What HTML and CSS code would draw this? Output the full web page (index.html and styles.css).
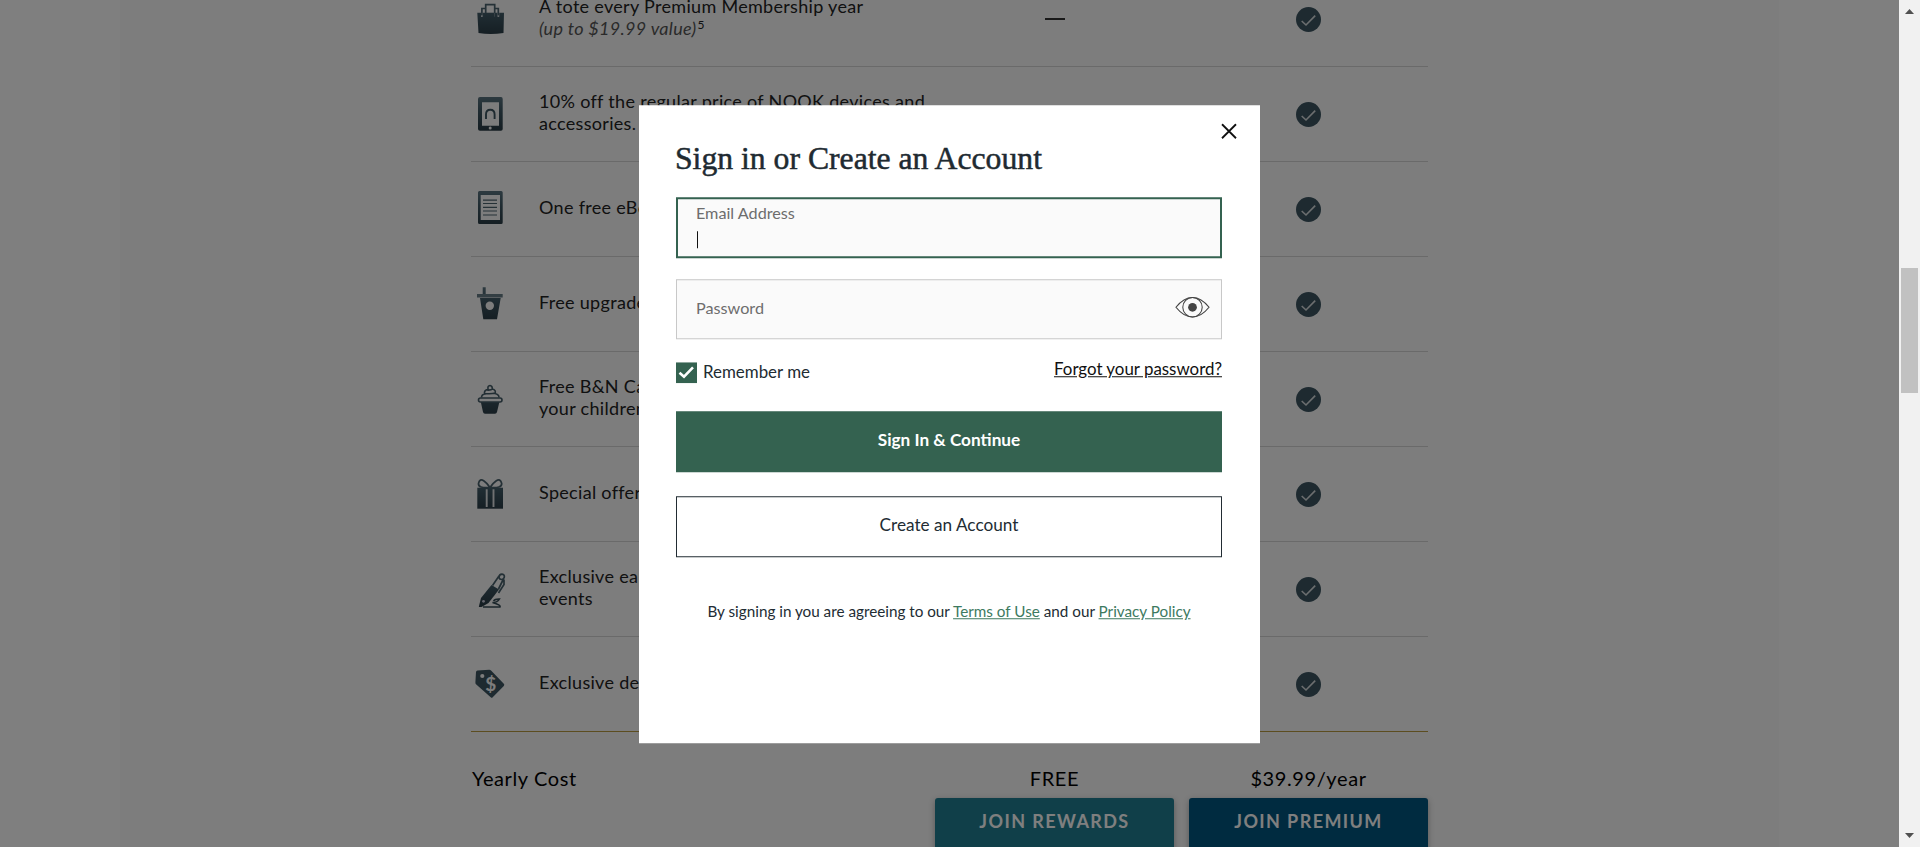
FILE: index.html
```html
<!DOCTYPE html>
<html lang="en">
<head>
<meta charset="utf-8">
<title>Sign in or Create an Account</title>
<link rel="stylesheet" href="styles.css">
</head>
<body>
<svg class="defs" width="0" height="0">
  <defs>
    <linearGradient id="ink" gradientUnits="userSpaceOnUse" x1="0" y1="4" x2="0" y2="36">
      <stop offset="0" stop-color="#58727e"/><stop offset=".4" stop-color="#3e5763"/><stop offset="1" stop-color="#2a3c46"/>
    </linearGradient>
    <symbol id="check" viewBox="0 0 25 25">
      <circle cx="12.5" cy="12.5" r="12.5" fill="#3c5561"/>
      <path d="M5.700 14l4.300 4 9.200-9.400" fill="none" stroke="#d8dcde" stroke-width="1.600"/>
    </symbol>
  </defs>
</svg>
<div class="window">
  <div class="viewport">
    <main class="page">
      <div class="benefits">
        <div class="row">
          <svg class="icon" viewBox="0 0 40 40"><path d="M6.300 13.700H10v4h1.700v-4h3.300v4h8.500v-4h3v4h1.700v-4H33L32.500 34q-13 2-25 0z" fill="url(#ink)"/><path d="M15 13.700h8.500v5H15z" fill="url(#ink)"/><path d="M10.900 16.500V9.500h3.800M23.700 9.500h3.600v7M14.700 14V5.700h9V14" fill="none" stroke="#4a626e" stroke-width="1.700"/></svg>
          <p class="label">A tote every Premium Membership year<br><em>(up to $19.99 value)</em><sup>5</sup></p>
          <span class="dash"></span>
          <svg class="tick"><use href="#check"/></svg>
        </div>
        <div class="row">
          <svg class="icon" viewBox="0 0 40 40"><path fill-rule="evenodd" d="M9 3h21q1.700 0 1.700 2v30q0 1.700-1.700 1.700H9Q7 36.700 7 35V5q0-2 2-2zM11 8.300v23.400h17V8.300z" fill="url(#ink)"/><path d="M15 25v-4.500q0-4.700 4.300-4.700t4.300 4.700V25" fill="none" stroke="#3c5561" stroke-width="1.900"/><circle cx="19.200" cy="34" r="1.500" fill="#fafafa"/></svg>
          <p class="label">10% off the regular price of NOOK devices and<br>accessories.</p>
          <span></span>
          <svg class="tick"><use href="#check"/></svg>
        </div>
        <div class="row">
          <svg class="icon" viewBox="0 0 40 40"><path fill-rule="evenodd" d="M8.500 2h21.700q1.500 0 1.500 1.500v30q0 1.500-1.500 1.500H8.500Q7 35 7 33.500v-30Q7 2 8.500 2zM9.700 6v25H29V6z" fill="url(#ink)"/><path d="M12 11.200h14M12 14.500h14M12 18.300h14M12 22h14M12 26h14" stroke="#4d646f" stroke-width="1.200"/></svg>
          <p class="label">One free eBook</p>
          <span></span>
          <svg class="tick"><use href="#check"/></svg>
        </div>
        <div class="row">
          <svg class="icon" viewBox="0 0 40 40"><path fill="url(#ink)" d="M11.700 3.300h3V10h-3zM9 14h20.700L26 35.300H12.300z"/><path d="M6 10h25.700v3.500H6z" fill="#667d86"/><circle cx="18.800" cy="21.700" r="4.200" fill="#fafafa"/></svg>
          <p class="label">Free upgrade</p>
          <span></span>
          <svg class="tick"><use href="#check"/></svg>
        </div>
        <div class="row">
          <svg class="icon" viewBox="0 0 40 40"><path d="M9.700 22.500H28.500L26 33q-.4 1.700-2 1.700H14q-1.600 0-2-1.700z" fill="url(#ink)"/><rect x="7.500" y="19" width="23.500" height="4" rx="2" fill="#fafafa" stroke="#455d68" stroke-width="1.600"/><path d="M10.500 18.500q0-3 3.500-3.500-2-3 3-5-.5-3.300 2-3.500 2.500.2 2.200 3.500 4.300 1 2.800 4.500 4 .8 4 4M14 14.500q6 .7 10.500-.5M16 11q4 .5 6-1.500" fill="none" stroke="#455d68" stroke-width="1.600"/></svg>
          <p class="label">Free B&amp;N Cafe treat for<br>your children</p>
          <span></span>
          <svg class="tick"><use href="#check"/></svg>
        </div>
        <div class="row">
          <svg class="icon" viewBox="0 0 40 40"><path d="M6.300 13.700H32v21H6.300z" fill="url(#ink)"/><path d="M15.700 15.300V33M22.500 15.300V33" stroke="#e0e3e5" stroke-width="1.900"/><path d="M19 13.500Q7 14.500 7.500 9.500 8.500 4 13 7q3 2 6 6.500Q22 9 25 7q4.500-3 5.700 2.500.3 5-11.700 4z" fill="none" stroke="#49616c" stroke-width="1.700"/></svg>
          <p class="label">Special offers</p>
          <span></span>
          <svg class="tick"><use href="#check"/></svg>
        </div>
        <div class="row">
          <svg class="icon" viewBox="0 0 40 40"><path d="M20.500 16l7.500 4.500L17.500 34l-7 4H7.800l.7-3L10 29z" fill="url(#ink)"/><path d="M21.500 16.500l6.500-9.500M27.500 20l5-10M28 8.500q.2-3.500 3-3.400 3 .6 2.200 3.400-.5 2-2.700 2-2 0-2.500-2zM33 10.500v5L27.500 24" fill="none" stroke="#49616c" stroke-width="1.700"/><path d="M12 38H29q1.200-2-7.500-4.500 5 0 7-3.500-4.500-.2-6 2" fill="none" stroke="#364c57" stroke-width="1.500"/><circle cx="12.500" cy="32.300" r="1.400" fill="#ccd"/></svg>
          <p class="label">Exclusive early access to<br>events</p>
          <span></span>
          <svg class="tick"><use href="#check"/></svg>
        </div>
        <div class="row last">
          <svg class="icon" viewBox="0 0 40 40"><path d="M6.500 6.500l11.800-.8q1 0 2 1l12.500 13.100q1 1.100 0 2.200L21.700 33.300q-1 1-2 0L5 20.300q-.7-.7-.6-2L5 8q.2-1.300 1.500-1.500z" fill="#3c5561"/><circle cx="11.300" cy="12" r="2.100" fill="#fafafa"/><text class="dollar" x="19.800" y="27" text-anchor="middle">$</text></svg>
          <p class="label">Exclusive deals</p>
          <span></span>
          <svg class="tick"><use href="#check"/></svg>
        </div>
        <div class="cost">
          <p class="cost-title">Yearly Cost</p>
          <div class="plan"><p>FREE</p><a class="join rewards">JOIN REWARDS</a></div>
          <div class="plan"><p>$39.99/year</p><a class="join premium">JOIN PREMIUM</a></div>
        </div>
      </div>
    </main>
    <div class="overlay">
      <section class="modal">
        <svg class="close" viewBox="0 0 16 16"><path d="M1 1l14 14M15 1L1 15" stroke="#111" stroke-width="1.800"/></svg>
        <h1>Sign in or Create an Account</h1>
        <div class="field active"><span>Email Address</span><i class="caret"></i></div>
        <div class="field"><span>Password</span>
          <svg class="eye" viewBox="0 0 36 22"><path d="M1 11Q9 1 18 1t17 10Q27 21 18 21T1 11z" fill="none" stroke="#444" stroke-width="1.200"/><circle cx="18" cy="11" r="10" fill="none" stroke="#444" stroke-width="1.100"/><circle cx="18" cy="11" r="4.500" fill="#444"/></svg>
        </div>
        <div class="options">
          <span class="remember"><svg class="box" viewBox="0 0 21 21"><path d="M0 0h21v21H0z" fill="#346250"/><path d="M3.500 10.500l4.500 4 9-9.300" fill="none" stroke="#fff" stroke-width="2.600"/></svg><span>Remember me</span></span>
          <a class="forgot">Forgot your password?</a>
        </div>
        <div class="btn primary">Sign In &amp; Continue</div>
        <div class="btn secondary">Create an Account</div>
        <p class="terms">By signing in you are agreeing to our <a>Terms of Use</a> and our <a>Privacy Policy</a></p>
      </section>
    </div>
  </div>
  <div class="scrollbar">
    <svg width="9" height="5" viewBox="0 0 9 5"><path d="M0 5l4.500-5L9 5z" fill="#505050"/></svg>
    <div class="thumb"></div>
    <svg class="down" width="9" height="5" viewBox="0 0 9 5"><path d="M0 0l4.500 5L9 0z" fill="#505050"/></svg>
  </div>
</div>
</body>
</html>
```
FILE: styles.css
```css
* { box-sizing: border-box; }
body { margin: 0; font-family: Lato, "Liberation Sans", sans-serif; overflow: hidden; }
p, h1 { margin: 0; }
.defs { display: block; height: 0; }
.window { display: flex; height: 847px; overflow: hidden; }
.viewport { position: relative; flex: 1; height: 847px; overflow: hidden; background: #fff; }
.page { margin: 0 120px; height: 847px; padding-left: 351px; overflow: hidden; background: #fafafa; }
.benefits { width: 957px; margin-top: -28px; }
.row { display: grid; grid-template-columns: 68px 396px 239px 15px 239px; align-items: center; height: 95px; border-bottom: 1px solid #d5d5d5; }
.row > :nth-child(3) { grid-column: 3; }
.row > :nth-child(4) { grid-column: 5; }
.row.last { border-bottom-color: #b89b40; }
.icon { width: 40px; height: 40px; }
.label { padding-bottom: 4px; font-size: 18px; line-height: 22px; letter-spacing: .31px; color: #222; white-space: nowrap; }
.label em { color: #555; }
.label sup { font-size: 12px; line-height: 0; vertical-align: 6px; margin-left: 1px; }
.dash { justify-self: center; width: 20px; height: 2px; background: #333; }
.tick { justify-self: center; width: 25px; height: 25px; margin-top: 1px; }
.dollar { font: bold 19px Lato, sans-serif; fill: #fafafa; }
.cost { display: grid; grid-template-columns: 449px 239px 239px; column-gap: 15px; font-size: 20px; line-height: 24px; letter-spacing: .6px; color: #000; padding-top: 34px; }
.cost-title { padding-left: 1px; }
.plan { text-align: center; }
.join { display: block; height: 60px; margin-top: 8px; border-radius: 3px; font-size: 18px; line-height: 47px; font-weight: 700; letter-spacing: 1.400px; color: #fff; box-shadow: 0 2px 6px rgba(0,0,0,.3); }
.rewards { background: #207e92; }
.premium { background: #005680; }
.overlay { position: absolute; inset: 0; display: flex; justify-content: center; align-items: flex-start; padding-top: 105px; background: rgba(0,0,0,.5); }
.modal { position: relative; width: 621px; height: 638px; padding: 36px 38px 0 37px; background: #fff; color: #222c33; font-size: 16.900px; transform: translateY(.25px); }
.close { position: absolute; left: 582px; top: 18px; width: 16px; height: 16px; }
.modal h1 { margin-left: -1px; font: 400 31.700px/36px "Liberation Serif", serif; white-space: nowrap; color: #202a31; -webkit-text-stroke: .5px #202a31; }
.field { display: flex; align-items: center; position: relative; height: 60px; margin-top: 21px; padding-left: 19px; border: 1px solid #c8c8c8; background: #fafafa; color: #6d6d6d; font-size: 16.200px; line-height: 20px; }
.field > span { margin-top: -2px; }
.field.active { flex-direction: column; align-items: flex-start; height: 61px; margin-top: 20px; padding: 6px 0 0 18px; border: 2px solid #346250; }
.caret { width: 1px; height: 17px; margin: 8px 0 0 1px; background: #111; }
.eye { width: 35px; height: 22px; margin-left: auto; margin-right: 11px; margin-bottom: 4px; }
.options { display: flex; justify-content: space-between; margin-top: 23px; height: 21px; line-height: 21px; }
.remember { display: flex; gap: 6px; }
.remember span { margin-top: -1px; }
.box { width: 21px; height: 21px; }
.forgot { color: #111; text-decoration: underline; margin-top: -4px; font-size: 16.900px; }
.btn { height: 61px; margin-top: 28px; text-align: center; line-height: 57px; font-size: 17.200px; }
.primary { background: #346250; color: #fff; font-weight: 700; }
.secondary { margin-top: 24px; border: 1px solid #222c33; line-height: 55px; }
.terms { margin-top: 44px; font-size: 15.250px; line-height: 20px; text-align: center; white-space: nowrap; }
.terms a { color: #3d7a5f; text-decoration: underline; }
.scrollbar { display: flex; flex-direction: column; align-items: center; width: 21px; height: 847px; padding: 9px 0; background: #f1f1f1; }
.thumb { width: 17px; height: 125px; margin-top: 254px; background: #c1c1c1; }
.down { margin-top: auto; }
```
